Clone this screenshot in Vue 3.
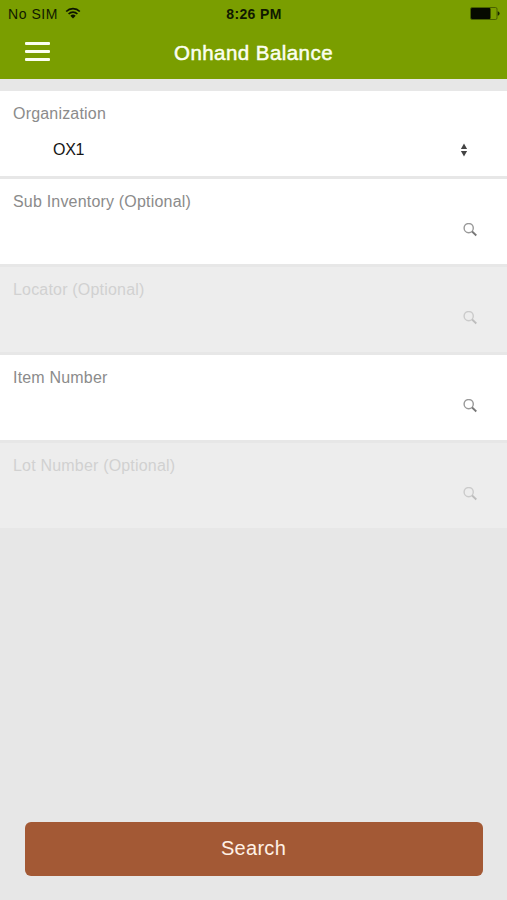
<template>
  <div class="screen">
    <header class="header">
      <div class="status">
        <div class="carrier">
          <span>No SIM</span>
          <svg class="wifi" width="16" height="12" viewBox="0 0 16 12">
            <path d="M1.2 4.5a9.6 9.6 0 0 1 13.6 0M3.6 7a6.2 6.2 0 0 1 8.8 0" fill="none" stroke="#0d1500" stroke-width="1.7" />
            <path d="M8 11.6 5.3 8.8a3.9 3.9 0 0 1 5.4 0z" fill="#0d1500" />
          </svg>
        </div>
        <span class="time">8:26 PM</span>
        <svg class="battery" width="30" height="13" viewBox="0 0 30 13">
          <rect x=".5" y=".5" width="26.5" height="12" rx="1.5" fill="none" stroke="#3c5200" stroke-width=".8" />
          <rect x="1" y="1" width="19.5" height="11" rx="1" fill="#060a00" />
          <path d="M27.7 4.2q1.9.6 1.9 2.3t-1.9 2.3z" fill="#1c2700" />
        </svg>
      </div>
      <div class="navbar">
        <button class="menu" type="button" aria-label="Menu">
          <i></i><i></i><i></i>
        </button>
        <h1>Onhand Balance</h1>
      </div>
    </header>

    <main class="fields">
      <section v-for="f in fields" :key="f.label" class="field" :class="{ disabled: f.disabled }">
        <div class="label">{{ f.label }}</div>
        <div class="control" :class="f.type">
          <span class="value">{{ f.value }}</span>
          <svg v-if="f.type === 'select'" class="arrows" width="8" height="14" viewBox="0 0 8 14">
            <path d="M4 .6 7.1 6H.9zM4 13.4.9 8h6.2z" fill="#444" />
          </svg>
          <svg v-else class="glass" width="14" height="14" viewBox="0 0 14 14">
            <circle cx="5.7" cy="5.1" r="4.6" fill="none" stroke="#999" stroke-width="1.4" />
            <path d="m9.1 8.5 4.2 4" stroke="#777" stroke-width="1.8" />
          </svg>
        </div>
      </section>
    </main>

    <footer class="footer">
      <button class="search" type="button">Search</button>
    </footer>
  </div>
</template>

<script setup>
import { ref } from "vue"

const fields = ref([
  { label: "Organization", value: "OX1", type: "select" },
  { label: "Sub Inventory (Optional)", value: "", type: "lookup" },
  { label: "Locator (Optional)", value: "", type: "lookup", disabled: true },
  { label: "Item Number", value: "", type: "lookup" },
  { label: "Lot Number (Optional)", value: "", type: "lookup", disabled: true }
])
</script>

<style>
body { background:#e7e7e7; }
</style>

<style scoped>
* { box-sizing:border-box; }
.screen {
  display:flex;
  flex-direction:column;
  height:900px;
  background:#e7e7e7;
  font-family:"Liberation Sans", Arial, sans-serif;
}
.header { height:79px; background:#7a9e00; }
.status {
  display:grid;
  grid-template-columns:1fr auto 1fr;
  align-items:center;
  height:28px;
  padding:0 7px 0 8px;
  font-size:14px;
  line-height:28px;
  color:#101900;
}
.carrier { display:flex; align-items:center; gap:7px; letter-spacing:.55px; }
.wifi { margin-top:-3px; }
.time { font-weight:bold; font-size:14px; letter-spacing:.35px; }
.battery { justify-self:end; margin-top:-1px; }
.navbar {
  display:grid;
  grid-template-columns:62px 1fr 62px;
  align-items:center;
  height:50px;
}
.menu {
  display:flex;
  flex-direction:column;
  gap:5px;
  margin:0 0 4px 25px;
  padding:0;
  width:25px;
  border:none;
  background:none;
}
.menu i { height:3px; background:#fbfff0; border-radius:1px; }
h1 {
  margin:0;
  padding-bottom:1px;
  font-size:20.5px;
  font-weight:normal;
  line-height:24px;
  letter-spacing:.45px;
  text-align:center;
  color:#fbfff0;
  -webkit-text-stroke:.5px #fbfff0;
}
.fields { display:flex; flex-direction:column; gap:3px; padding-top:12px; }
.field {
  height:85px;
  padding:13px 30px 0 13px;
  background:#fff;
}
.label { height:20px; font-size:16px; line-height:20px; letter-spacing:.19px; color:#8b8b8b; white-space:nowrap; }
.control {
  display:flex;
  align-items:center;
  justify-content:space-between;
  height:32px;
  margin-top:10px;
}
.control.lookup { height:16px; }
.value { padding-left:40px; font-size:16px; letter-spacing:-.3px; color:#151515; }
.arrows { margin-right:9px; }
.disabled { background:#ededed; }
.disabled .label { color:#d1d1d1; }
.disabled .glass { opacity:.4; }
.footer { margin-top:auto; padding:0 24px 24px 25px; }
.search {
  display:block;
  width:100%;
  height:54px;
  padding:0 1px 2px 0;
  border:none;
  border-radius:6px;
  background:#a35935;
  color:#fff1e6;
  font-family:inherit;
  font-size:20px;
  letter-spacing:.3px;
}
</style>
